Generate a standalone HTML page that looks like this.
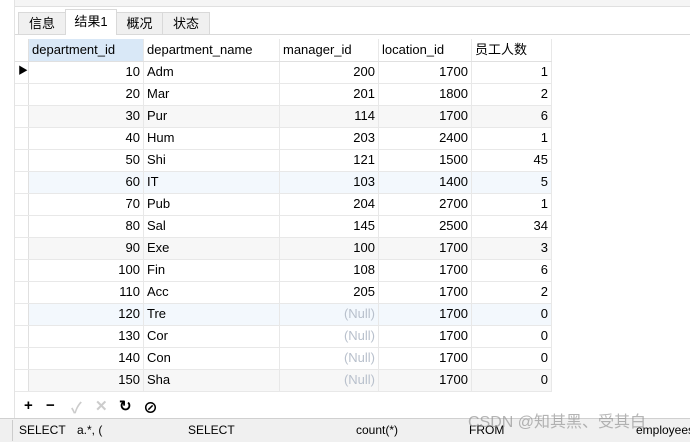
<!DOCTYPE html>
<html><head><style>
body{margin:0;width:690px;height:441px;background:#fff;font-family:"Liberation Sans","Noto Sans CJK SC",sans-serif;font-size:13px;color:#000;position:relative;overflow:hidden}
.a{position:absolute}
table{border-collapse:collapse;position:absolute;left:15px;top:39px;table-layout:fixed;font-size:13px}
td{height:21px;border-right:1px solid #e8e8e8;border-bottom:1px solid #e8e8e8;padding:0 3px;white-space:nowrap;overflow:hidden;box-sizing:border-box;line-height:20px}
td.r{text-align:right}
tr.h td{background:#fff;border-bottom:1px solid #e0e0e0}
tr.g td{background:#f7f7f7}
tr.b td{background:#f3f8fd}
td.i{background:#fff!important;border-right:1px solid #e0e0e0;padding:0}
.n{color:#b8c0cc}
.tab{position:absolute;top:12px;height:21px;border:1px solid #d9d9d9;background:#f0f0f0;font-size:13px;line-height:21px;text-align:center}
tr{height:22px}
</style></head><body>
<div class="a" style="left:15px;top:0;width:675px;height:6px;background:#f5f5f5;border-bottom:1px solid #e0e0e0"></div>
<div class="a" style="left:15px;top:7px;width:675px;height:27px;background:#fff;border-bottom:1px solid #d9d9d9"></div>
<div class="a" style="left:14px;top:0;width:1px;height:420px;background:#e3e3e3"></div>
<div class="tab" style="left:18px;width:46px">信息</div>
<div class="tab" style="left:65px;width:50px;top:9px;height:25px;background:#fff;border-bottom:none;line-height:23px">结果1</div>
<div class="tab" style="left:116px;width:45px">概况</div>
<div class="tab" style="left:162px;width:46px">状态</div>
<table>
<colgroup><col style="width:13px"><col style="width:115px"><col style="width:136px"><col style="width:99px"><col style="width:93px"><col style="width:80px"></colgroup>
<tr class="h"><td class="i"></td><td style="background:#d9e8f7">department_id</td><td>department_name</td><td>manager_id</td><td>location_id</td><td>员工人数</td></tr>
<tr><td class="i" style="font-size:10px;padding-left:3px">▶</td><td class="r">10</td><td>Adm</td><td class="r">200</td><td class="r">1700</td><td class="r">1</td></tr>
<tr><td class="i"></td><td class="r">20</td><td>Mar</td><td class="r">201</td><td class="r">1800</td><td class="r">2</td></tr>
<tr class="g"><td class="i"></td><td class="r">30</td><td>Pur</td><td class="r">114</td><td class="r">1700</td><td class="r">6</td></tr>
<tr><td class="i"></td><td class="r">40</td><td>Hum</td><td class="r">203</td><td class="r">2400</td><td class="r">1</td></tr>
<tr><td class="i"></td><td class="r">50</td><td>Shi</td><td class="r">121</td><td class="r">1500</td><td class="r">45</td></tr>
<tr class="b"><td class="i"></td><td class="r">60</td><td>IT</td><td class="r">103</td><td class="r">1400</td><td class="r">5</td></tr>
<tr><td class="i"></td><td class="r">70</td><td>Pub</td><td class="r">204</td><td class="r">2700</td><td class="r">1</td></tr>
<tr><td class="i"></td><td class="r">80</td><td>Sal</td><td class="r">145</td><td class="r">2500</td><td class="r">34</td></tr>
<tr class="g"><td class="i"></td><td class="r">90</td><td>Exe</td><td class="r">100</td><td class="r">1700</td><td class="r">3</td></tr>
<tr><td class="i"></td><td class="r">100</td><td>Fin</td><td class="r">108</td><td class="r">1700</td><td class="r">6</td></tr>
<tr><td class="i"></td><td class="r">110</td><td>Acc</td><td class="r">205</td><td class="r">1700</td><td class="r">2</td></tr>
<tr class="b"><td class="i"></td><td class="r">120</td><td>Tre</td><td class="r n">(Null)</td><td class="r">1700</td><td class="r">0</td></tr>
<tr><td class="i"></td><td class="r">130</td><td>Cor</td><td class="r n">(Null)</td><td class="r">1700</td><td class="r">0</td></tr>
<tr><td class="i"></td><td class="r">140</td><td>Con</td><td class="r n">(Null)</td><td class="r">1700</td><td class="r">0</td></tr>
<tr class="g"><td class="i"></td><td class="r">150</td><td>Sha</td><td class="r n">(Null)</td><td class="r">1700</td><td class="r">0</td></tr>
</table>
<div class="a" style="left:24px;top:397px;font-size:15px;font-weight:bold;letter-spacing:0">
<span style="position:absolute;left:0">+</span><span style="position:absolute;left:22px">−</span><span style="position:absolute;left:47px;color:#ccc">✓</span><span style="position:absolute;left:71px;color:#ccc">✕</span><span style="position:absolute;left:95px">↻</span><span style="position:absolute;left:119px">⊘</span></div>
<div class="a" style="left:0;top:418px;width:690px;height:23px;background:#f0f0f0;border-top:1px solid #d0d0d0"></div>
<div class="a" style="left:12px;top:420px;width:1px;height:21px;background:#ccc"></div>
<div class="a" style="top:423px;left:19px;font-size:12px">SELECT</div>
<div class="a" style="top:423px;left:77px;font-size:12px">a.*, (</div>
<div class="a" style="top:423px;left:188px;font-size:12px">SELECT</div>
<div class="a" style="top:423px;left:356px;font-size:12px">count(*)</div>
<div class="a" style="top:423px;left:469px;font-size:12px">FROM</div>
<div class="a" style="top:423px;left:636px;font-size:12px">employees</div>
<div class="a" style="top:408px;left:468px;font-size:16px;color:rgba(150,150,150,.7)">CSDN @知其黑、受其白</div>
</body></html>
